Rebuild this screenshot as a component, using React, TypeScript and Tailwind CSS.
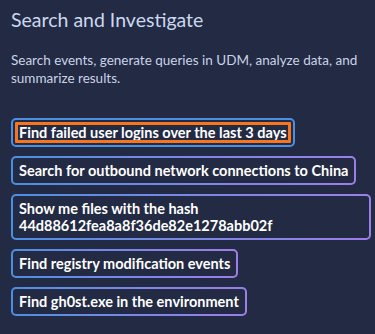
const prompts = [
  "Search for outbound network connections to China",
  "Show me files with the hash 44d88612fea8a8f36de82e1278abb02f",
  "Find registry modification events",
  "Find gh0st.exe in the environment",
];

function Prompt({ text }: { text: string }) {
  return (
    <div className="self-start rounded-[5px] bg-gradient-to-r from-[#4a8fe2] to-[#9c7ee8] p-[2px]">
      <div className="rounded-[3px] bg-[#232a43] px-[6px] py-[4px] text-[14.5px] leading-[17px] font-bold text-white">
        {text}
      </div>
    </div>
  );
}

export default function App() {
  return (
    <div
      className="h-[334px] w-[375px] bg-[#232a43] pl-[11px] pr-[4px] pt-[7px]"
      style={{ fontFamily: "Lato, 'Noto Sans', sans-serif" }}
    >
      <h1 className="text-[19.5px] leading-[26px] text-[#cbd8f0]">Search and Investigate</h1>
      <p className="mt-[18px] pr-[7px] text-[13.5px] leading-[18px] text-[#c9d3e8]">
        Search events, generate queries in UDM, analyze data, and summarize results.
      </p>
      <div className="mt-[31px] flex flex-col gap-[9px]">
        <div className="self-start rounded-[5px] border-2 border-[#4a8fe2]">
          <div className="rounded-[3px] px-[6px] py-[4px] text-[14.5px] leading-[17px] font-bold text-white outline-[3px] outline-solid outline-[#f5761f] outline-offset-[-5px]">
            Find failed user logins over the last 3 days
          </div>
        </div>
        {prompts.map((p) => (
          <Prompt key={p} text={p} />
        ))}
      </div>
    </div>
  );
}
